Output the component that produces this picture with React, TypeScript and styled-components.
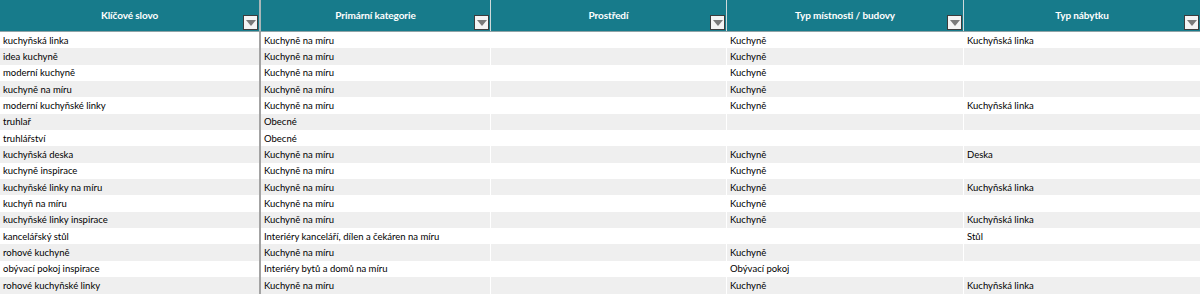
import React from "react";
import styled, { createGlobalStyle } from "styled-components";

const GlobalStyle = createGlobalStyle`
  html, body {
    margin: 0;
    padding: 0;
    background: #ffffff;
  }
  body {
    font-family: "Lato", "Open Sans", sans-serif;
  }
`;

const COLUMNS = "259px 2px 229px 1px 235px 1px 236px 1px 1fr";

type Row = [string, string, string, string, string];

const headers = [
  "Klíčové slovo",
  "Primární kategorie",
  "Prostředí",
  "Typ místnosti / budovy",
  "Typ nábytku",
];

const rows: Row[] = [
  ["kuchyňská linka", "Kuchyně na míru", "", "Kuchyně", "Kuchyňská linka"],
  ["idea kuchyně", "Kuchyně na míru", "", "Kuchyně", ""],
  ["moderní kuchyně", "Kuchyně na míru", "", "Kuchyně", ""],
  ["kuchyně na míru", "Kuchyně na míru", "", "Kuchyně", ""],
  ["moderní kuchyňské linky", "Kuchyně na míru", "", "Kuchyně", "Kuchyňská linka"],
  ["truhlař", "Obecné", "", "", ""],
  ["truhlářství", "Obecné", "", "", ""],
  ["kuchyňská deska", "Kuchyně na míru", "", "Kuchyně", "Deska"],
  ["kuchyně inspirace", "Kuchyně na míru", "", "Kuchyně", ""],
  ["kuchyňské linky na míru", "Kuchyně na míru", "", "Kuchyně", "Kuchyňská linka"],
  ["kuchyň na míru", "Kuchyně na míru", "", "Kuchyně", ""],
  ["kuchyňské linky inspirace", "Kuchyně na míru", "", "Kuchyně", "Kuchyňská linka"],
  ["kancelářský stůl", "Interiéry kanceláří, dílen a čekáren na míru", "", "", "Stůl"],
  ["rohové kuchyně", "Kuchyně na míru", "", "Kuchyně", ""],
  ["obývací pokoj inspirace", "Interiéry bytů a domů na míru", "", "Obývací pokoj", ""],
  ["rohové kuchyňské linky", "Kuchyně na míru", "", "Kuchyně", "Kuchyňská linka"],
];

const FilterIcon = () => (
  <FilterButton>
    <svg width="10" height="6" viewBox="0 0 10 6">
      <polygon points="0,0 10,0 5,6" fill="#7a7a7a" />
    </svg>
  </FilterButton>
);

export default function App() {
  return (
    <>
      <GlobalStyle />
      <Sheet>
        <HeaderRow>
          {headers.map((h, i) => (
            <React.Fragment key={h}>
              {i > 0 && <HeaderDivider thick={i === 1} />}
              <HeaderCell>
                <HeaderLabel>{h}</HeaderLabel>
                <FilterIcon />
              </HeaderCell>
            </React.Fragment>
          ))}
        </HeaderRow>
        {rows.map((r, ri) => (
          <BodyRow key={ri} striped={ri % 2 === 1}>
            {r.map((c, ci) => (
              <React.Fragment key={ci}>
                {ci > 0 && <BodyDivider thick={ci === 1} />}
                <Cell>{c}</Cell>
              </React.Fragment>
            ))}
          </BodyRow>
        ))}
      </Sheet>
    </>
  );
}

const Sheet = styled.div`
  width: 1200px;
  display: flex;
  flex-direction: column;
`;

const HeaderRow = styled.div`
  display: grid;
  grid-template-columns: ${COLUMNS};
  height: 31px;
  background: #177b8b;
  border-bottom: 1px solid #8fa3a6;
`;

const HeaderCell = styled.div`
  position: relative;
  display: flex;
  align-items: center;
  justify-content: center;
  padding-bottom: 2px;
`;

const HeaderLabel = styled.span`
  color: #ffffff;
  font-weight: 700;
  font-size: 10px;
  letter-spacing: -0.1px;
`;

const HeaderDivider = styled.div<{ thick?: boolean }>`
  background: ${(p) => (p.thick ? "#a9b7b9" : "#cfdadb")};
`;

const FilterButton = styled.div`
  position: absolute;
  right: 1px;
  bottom: 1px;
  width: 15px;
  height: 15px;
  box-sizing: border-box;
  background: #f4f4f4;
  border: 1px solid #3c3c3c;
  display: flex;
  align-items: center;
  justify-content: center;
`;

const BodyRow = styled.div<{ striped?: boolean }>`
  display: grid;
  grid-template-columns: ${COLUMNS};
  height: 16.35px;
  background: ${(p) => (p.striped ? "#efefef" : "#ffffff")};
`;

const BodyDivider = styled.div<{ thick?: boolean }>`
  background: ${(p) => (p.thick ? "#a3a3a3" : "#ffffff")};
`;

const Cell = styled.div`
  display: flex;
  align-items: center;
  padding-left: 3px;
  font-size: 9.5px;
  color: #000000;
  white-space: nowrap;
  overflow: hidden;
`;
